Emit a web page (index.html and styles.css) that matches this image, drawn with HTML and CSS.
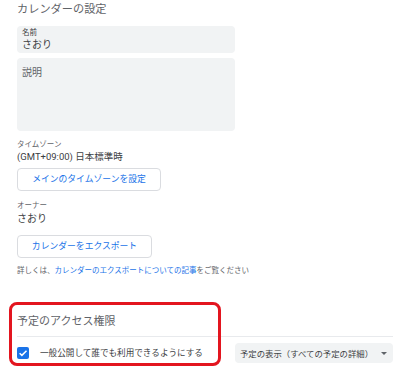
FILE: index.html
```html
<!DOCTYPE html>
<html lang="ja">
<head>
<meta charset="utf-8">
<link rel="stylesheet" href="styles.css">
</head>
<body>
<div class="page">
  <h1 class="title">カレンダーの設定</h1>
  <div class="field name-field">
    <div class="field-label">名前</div>
    <div class="field-value">さおり</div>
  </div>
  <div class="field desc-field">
    <div class="desc-placeholder">説明</div>
  </div>
  <div class="info">
    <div class="info-label">タイムゾーン</div>
    <div class="info-value">(GMT+09:00) 日本標準時</div>
  </div>
  <button class="btn tz-btn">メインのタイムゾーンを設定</button>
  <div class="info owner">
    <div class="info-label">オーナー</div>
    <div class="info-value owner-value">さおり</div>
  </div>
  <button class="btn export-btn">カレンダーをエクスポート</button>
  <p class="help">詳しくは、<a class="link">カレンダーのエクスポートについての記事</a>をご覧ください</p>
  <section class="access">
    <div class="highlight"></div>
    <h2 class="section-title">予定のアクセス権限</h2>
    <div class="divider"></div>
    <div class="access-row">
      <label class="check">
        <span class="checkbox">
          <svg width="12" height="12" viewBox="0 0 12 12"><path d="M2.6 6.2 L4.9 8.4 L9.5 3.8" fill="none" stroke="#fff" stroke-width="1.5"/></svg>
        </span>
        <span class="check-text">一般公開して誰でも利用できるようにする</span>
      </label>
      <div class="select">
        <span class="select-text">予定の表示（すべての予定の詳細）</span>
        <span class="arrow"></span>
      </div>
    </div>
  </section>
</div>
</body>
</html>
```

FILE: styles.css
```css
* { box-sizing: border-box; }
html, body { margin: 0; padding: 0; background: #fff; }
body {
  font-family: "Roboto", "Noto Sans CJK JP", sans-serif;
  color: #3c4043;
  width: 400px;
  height: 368px;
  overflow: hidden;
}
.page {
  padding: 2px 7px 0 17px;
}
.title {
  margin: 0;
  font-size: 11.2px;
  font-weight: 400;
  line-height: 16px;
  color: #5f6368;
}
.field {
  width: 218px;
  background: #f1f3f4;
  border-radius: 4px;
}
.name-field {
  margin-top: 8px;
  height: 27px;
  padding: 2px 0 0 5px;
}
.field-label {
  font-size: 7.5px;
  line-height: 10px;
  color: #3c4043;
}
.field-value {
  font-size: 10px;
  line-height: 13px;
  color: #3c4043;
}
.desc-field {
  margin-top: 5px;
  height: 73px;
  padding: 8px 0 0 5px;
}
.desc-placeholder {
  font-size: 10px;
  line-height: 14px;
  color: #5f6368;
}
.info {
  margin-top: 9px;
}
.info-label {
  font-size: 7.5px;
  line-height: 10px;
  color: #5f6368;
}
.info-value {
  font-size: 9.5px;
  line-height: 13px;
  color: #3c4043;
}
.owner-value {
  font-size: 10px;
  line-height: 14px;
  margin-top: 1px;
}
.btn {
  display: block;
  margin: 5px 0 0 0;
  height: 23px;
  padding: 0;
  background: #fff;
  border: 1px solid #dadce0;
  border-radius: 4px;
  font-family: inherit;
  font-size: 8.8px;
  color: #1a73e8;
  line-height: 21px;
  text-align: center;
}
.tz-btn { width: 144px; }
.owner { margin-top: 10px; }
.export-btn { width: 135px; margin-top: 9px; }
.help {
  margin: 7px 0 0 0;
  font-size: 7.5px;
  line-height: 11px;
  color: #5f6368;
  white-space: nowrap;
}
.link { color: #1a73e8; }
.access {
  position: relative;
  margin-top: 26px;
  padding-top: 12px;
}
.highlight {
  position: absolute;
  left: -8px;
  top: 0;
  width: 212px;
  height: 64px;
  border: 3px solid #e3151f;
  border-radius: 8px;
  pointer-events: none;
}
.section-title {
  margin: 0;
  font-size: 11px;
  font-weight: 400;
  line-height: 16px;
  color: #5f6368;
}
.divider {
  margin-top: 6px;
  height: 1px;
  background: #e8eaed;
}
.access-row {
  display: flex;
  align-items: center;
  justify-content: space-between;
  margin-top: 6px;
  height: 20px;
}
.check {
  display: flex;
  align-items: center;
  gap: 11px;
}
.checkbox {
  width: 12px;
  height: 12px;
  border-radius: 2px;
  background: #1a73e8;
  display: flex;
}
.check-text {
  font-size: 8.6px;
  line-height: 12px;
  color: #3c4043;
}
.select {
  width: 158px;
  height: 20px;
  background: #f1f3f4;
  border-radius: 4px;
  display: flex;
  align-items: center;
  justify-content: space-between;
  padding: 0 6px 0 5px;
}
.select-text {
  font-size: 8.4px;
  color: #3c4043;
}
.arrow {
  width: 0;
  height: 0;
  border-left: 3px solid transparent;
  border-right: 3px solid transparent;
  border-top: 3px solid #5f6368;
}
```
